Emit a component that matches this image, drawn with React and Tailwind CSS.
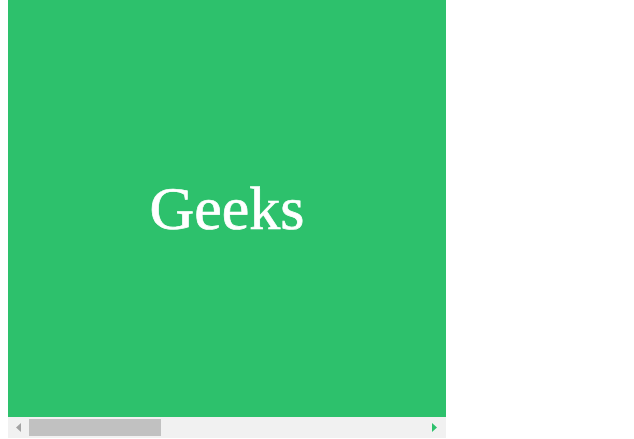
import React from 'react';

const App = () => {
  return (
    <div className="w-[634px] h-[439px] bg-white pl-2">
      <div className="w-[438px]">
        {/* Green panel */}
        <div className="h-[417px] bg-[#2dc16c] flex items-center justify-center">
          <span
            className="text-white text-[62px] leading-none pb-[2px] [-webkit-text-stroke:0.7px_white]"
            style={{ fontFamily: '"Liberation Serif", "Times New Roman", serif' }}
          >
            Geeks
          </span>
        </div>

        {/* Horizontal scrollbar */}
        <div className="h-[21px] bg-[#f1f1f1] flex items-center">
          <div className="w-[21px] h-full flex items-center justify-center">
            <svg width="5" height="9" viewBox="0 0 5 9">
              <polygon points="5,0 5,9 0,4.5" fill="#a3a3a3" />
            </svg>
          </div>
          <div className="w-[132px] h-[17px] bg-[#c1c1c1]" />
          <div className="flex-1" />
          <div className="w-[21px] h-full flex items-center justify-center pr-[2px]">
            <svg width="5" height="9" viewBox="0 0 5 9">
              <polygon points="0,0 0,9 5,4.5" fill="#2dc16c" />
            </svg>
          </div>
        </div>
      </div>
    </div>
  );
};

export default App;
